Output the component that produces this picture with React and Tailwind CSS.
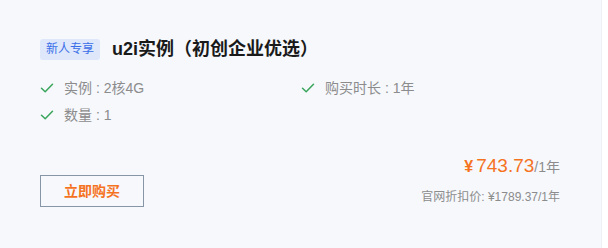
import React from "react";

const Check = () => (
  <svg width="14" height="14" viewBox="0 0 14 14" fill="none" className="shrink-0">
    <path d="M1.5 7.2 L5.2 10.8 L12.5 3.2" stroke="#3aa55c" strokeWidth="1.5" strokeLinecap="round" strokeLinejoin="round" />
  </svg>
);

const Feature = ({ label, value }) => (
  <div className="flex items-center gap-[10px] h-[20px]">
    <Check />
    <span className="text-[14px] text-[#8c8c8c]">
      {label} : {value}
    </span>
  </div>
);

export default function App() {
  return (
    <div
      className="w-[608px] h-[248px] bg-white flex"
      style={{ fontFamily: '"Liberation Sans", "Noto Sans CJK SC", sans-serif' }}
    >
      <div className="w-[602px] h-full bg-[#f6f8fc] border-r border-[#eef2f8] pl-[40px] pr-[41px] pt-[38px] flex flex-col">
        <div className="flex items-center gap-[12px] h-[22px]">
          <span className="h-[21px] px-[6px] flex items-center rounded-[3px] bg-[#dfe8fb] text-[#3a6ee8] text-[12px]">
            新人专享
          </span>
          <span className="text-[18px] font-bold text-[#1a1a1a]">u2i实例（初创企业优选）</span>
        </div>
        <div className="grid grid-cols-[261px_1fr] gap-y-[7px] mt-[18px]">
          <Feature label="实例" value="2核4G" />
          <Feature label="购买时长" value="1年" />
          <Feature label="数量" value="1" />
        </div>
        <div className="flex justify-between items-end mt-[27px]">
          <button className="w-[104px] h-[32px] mb-[10px] border border-[#8796a6] text-[#f5731f] text-[14px] font-bold flex items-center justify-center">
            立即购买
          </button>
          <div className="flex flex-col items-end">
            <div className="flex items-baseline leading-[27px]">
              <span className="text-[#f5731f] text-[16px] font-bold">¥</span>
              <span className="text-[#f5731f] text-[19px] ml-[3px]">743.73</span>
              <span className="text-[#8c8c8c] text-[14px]">/1年</span>
            </div>
            <div className="text-[12px] leading-[18px] text-[#8c8c8c] mt-[7px] mb-[11px]">官网折扣价: ¥1789.37/1年</div>
          </div>
        </div>
      </div>
    </div>
  );
}
